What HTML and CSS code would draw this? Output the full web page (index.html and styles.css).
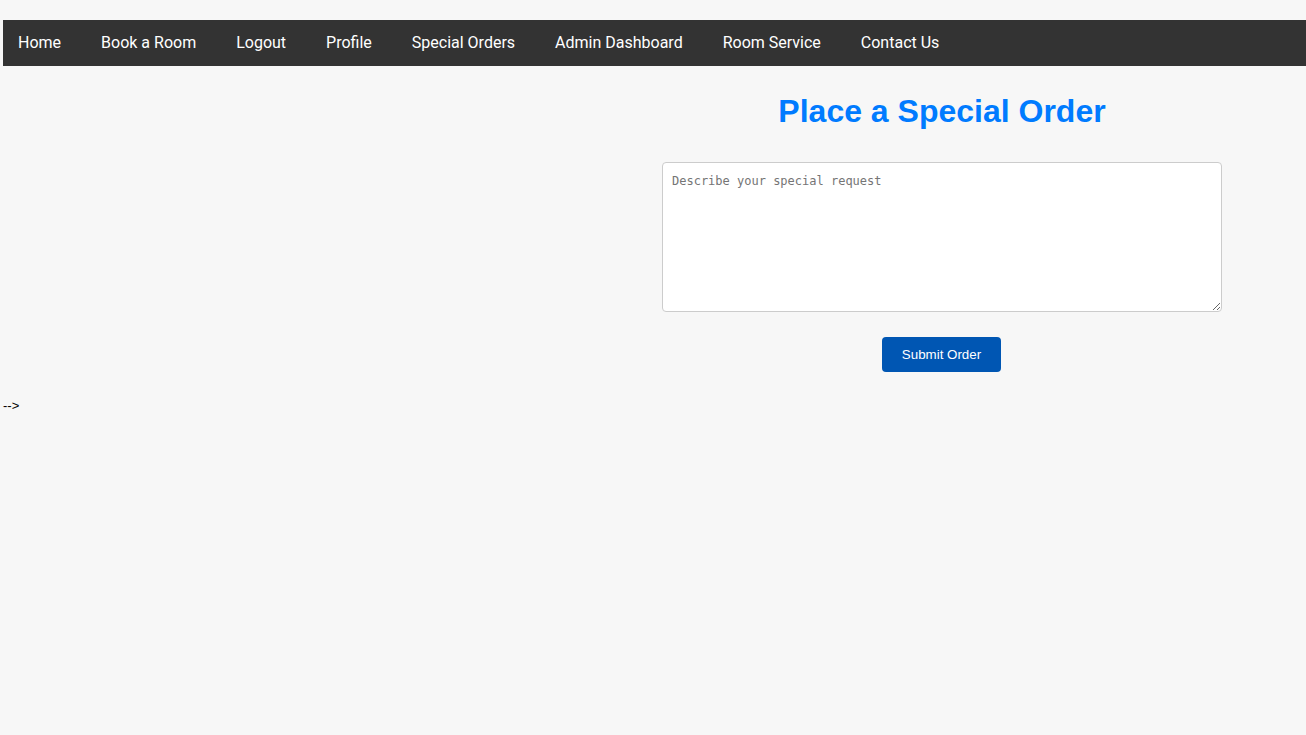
FILE: index.html
```html
<!DOCTYPE html>
<html>
<head>
<meta charset="utf-8">
<link rel="stylesheet" href="styles.css">
</head>
<body>
<nav class="navbar">
  <a href="#">Home</a>
  <a href="#">Book a Room</a>
  <a href="#">Logout</a>
  <a href="#">Profile</a>
  <a href="#">Special Orders</a>
  <a href="#">Admin Dashboard</a>
  <a href="#">Room Service</a>
  <a href="#">Contact Us</a>
</nav>
<main class="layout">
  <div class="spacer"></div>
  <section class="order">
    <h1 class="title">Place a Special Order</h1>
    <form class="order-form">
      <textarea class="request" placeholder="Describe your special request"></textarea>
      <button type="button" class="submit">Submit Order</button>
    </form>
  </section>
</main>
<div class="stray">--&gt;</div>
</body>
</html>
```

FILE: styles.css
```css
html, body {
  margin: 0;
  background: #f7f7f7;
}
body {
  padding: 20px 0 0 3px;
  font-family: "Liberation Sans", Arial, sans-serif;
}
.navbar {
  box-sizing: border-box;
  display: flex;
  align-items: center;
  gap: 40px;
  height: 46px;
  padding: 0 0 2px 15px;
  background: #333333;
}
.navbar a {
  color: #ffffff;
  text-decoration: none;
  font-family: Roboto, sans-serif;
  font-size: 16px;
}
.layout {
  display: flex;
}
.spacer {
  width: 659px;
  flex: none;
}
.order {
  width: 560px;
  flex: none;
  display: flex;
  flex-direction: column;
  align-items: center;
}
.title {
  margin: 27px 0 0;
  font-family: "Liberation Sans", Arial, sans-serif;
  font-size: 32px;
  font-weight: bold;
  color: #007bff;
  line-height: 37px;
}
.order-form {
  width: 100%;
  display: flex;
  flex-direction: column;
  align-items: center;
  margin-top: 32px;
}
.request {
  box-sizing: border-box;
  width: 560px;
  height: 150px;
  padding: 11px 9px 9px;
  border: 1px solid #cccccc;
  border-radius: 4px;
  background: #ffffff;
  font-family: "DejaVu Sans Mono", monospace;
  font-size: 12px;
  resize: vertical;
}
.request::placeholder {
  color: #757575;
}
.submit {
  margin: 25px 1px 0 0;
  width: 119px;
  height: 35px;
  border: none;
  border-radius: 4px;
  background: #0056b3;
  color: #ffffff;
  font-family: "Liberation Sans", Arial, sans-serif;
  font-size: 13.33px;
}
.stray {
  margin-top: 26px;
  font-family: "Liberation Sans", Arial, sans-serif;
  font-size: 13px;
  color: #000;
}
```
